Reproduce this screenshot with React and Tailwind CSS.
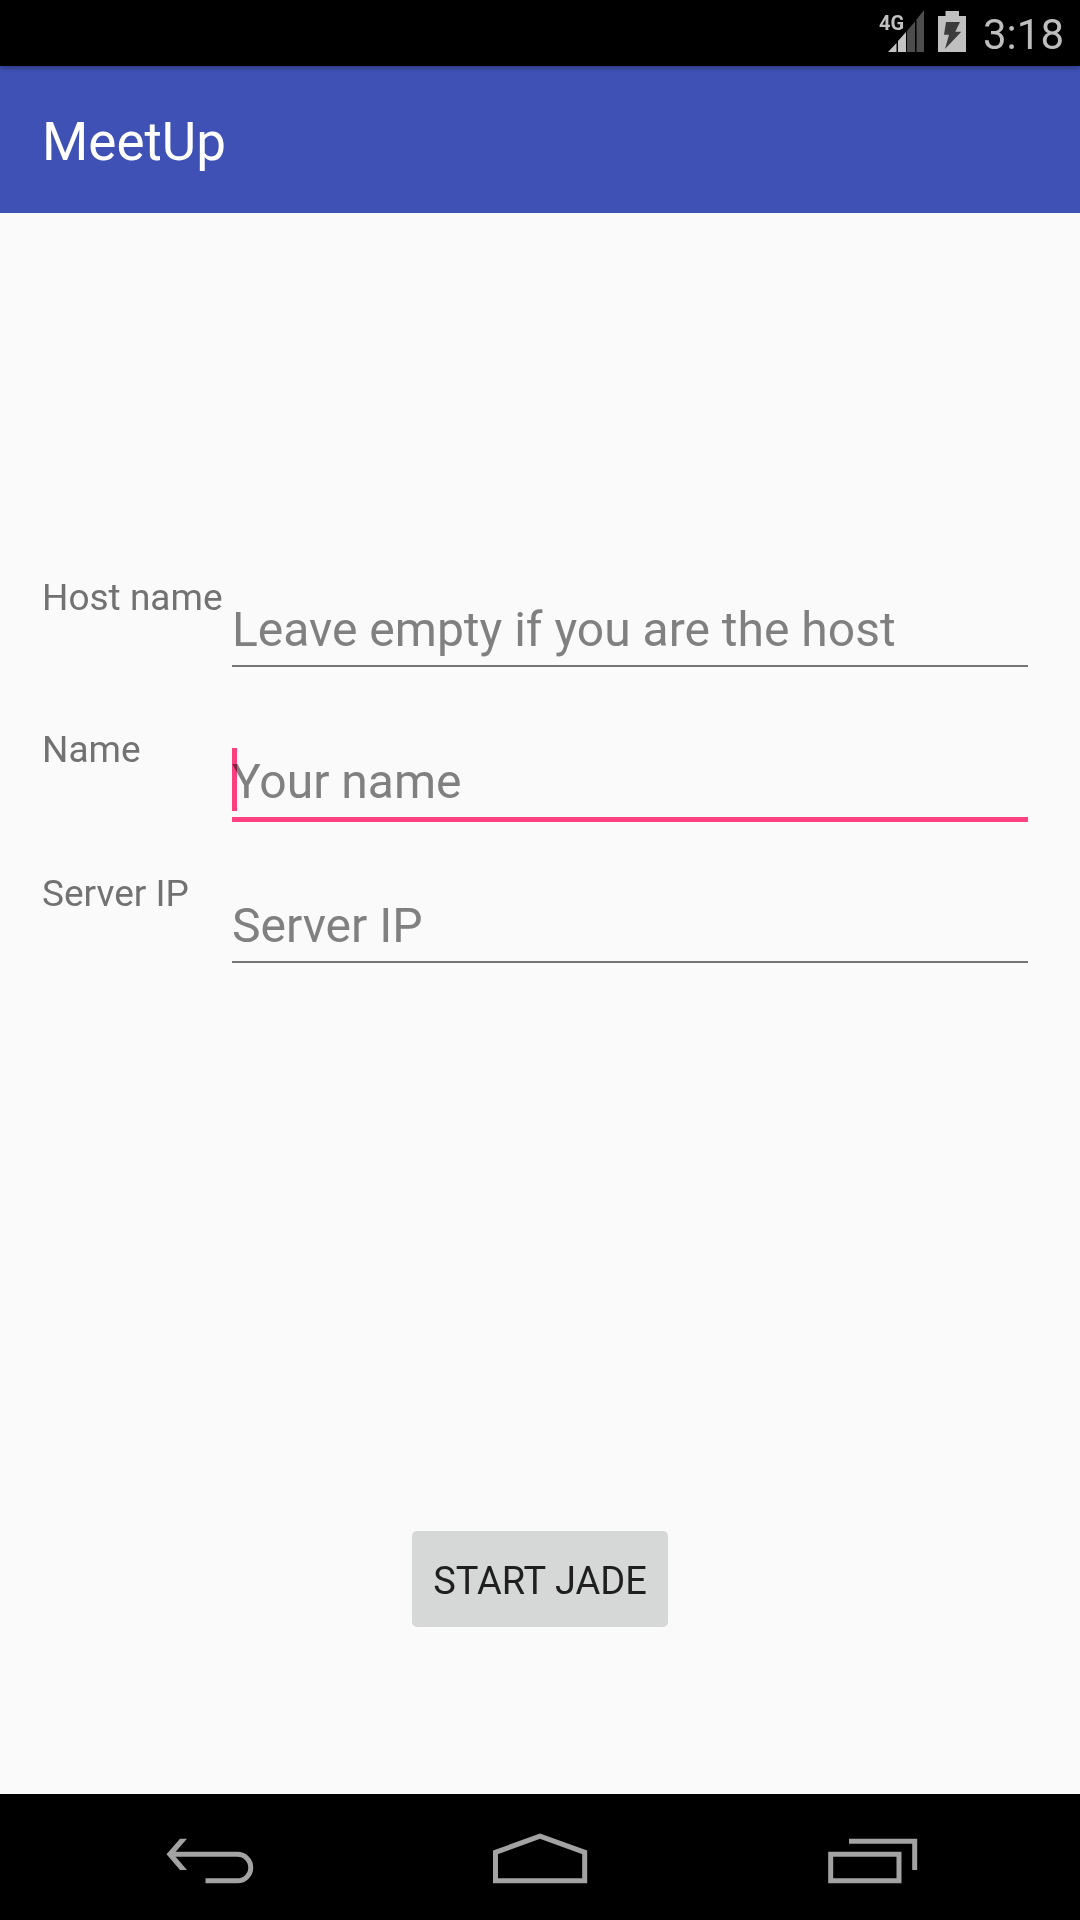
import React from "react";

function SignalIcon() {
  return (
    <div className="relative h-[42px] w-[46px]" role="img" aria-label="4G signal">
      <svg viewBox="0 0 46 42" className="h-[42px] w-[46px]" aria-hidden="true">
        <path d="M9 42L17.500 33V42Z" fill="#c4c4c4" />
        <path d="M19 31L27 22V42H19Z" fill="#c4c4c4" />
        <path d="M28 21L36 11.500V42H28Z" fill="#4d4d4d" />
        <path d="M37.500 9.500L45 0V42H37.500Z" fill="#4d4d4d" />
      </svg>
      <span className="absolute top-px left-0 text-[20px] leading-6 font-bold text-[#c0c0c0]">4G</span>
    </div>
  );
}

function BatteryIcon() {
  return (
    <svg viewBox="0 0 28 42" className="h-[42px] w-[28px]" role="img" aria-label="Charging">
      <path d="M7.500 1H21V6H28V42H0V6H7.500Z" fill="#c0c0c0" />
      <path d="M8 12H22L17.300 21.700H23.300L7 39L11 24.700H6Z" fill="#3c3c3c" />
    </svg>
  );
}

const fields = [
  { id: "host", label: "Host name", hint: "Leave empty if you are the host", gap: "", line: "border-b-2 border-[#757575]" },
  { id: "name", label: "Name", hint: "Your name", gap: "mt-[60px]", line: "border-b-[5px] border-[#ff4081]", active: true },
  { id: "server", label: "Server IP", hint: "Server IP", gap: "mt-[49px]", line: "border-b-2 border-[#757575]" },
];

function Field({ id, label, hint, gap, line, active }) {
  return (
    <div className={`flex items-start ${gap}`}>
      <label htmlFor={id} className="w-[190px] shrink-0 whitespace-nowrap text-[37px] leading-[46px] text-[#727272]">
        {label}
      </label>
      <div className="relative min-w-0 flex-1 pt-[27px]">
        <input
          id={id}
          type="text"
          placeholder={hint}
          className={`block h-auto w-full rounded-none bg-transparent pb-[7px] text-[48px] leading-[56px] text-[#212121] caret-[#ff4081] outline-none placeholder:text-[#808080] placeholder:opacity-100 ${line}`}
        />
        {active && <span className="absolute top-[21px] left-0 h-[63px] w-[5px] bg-[#ff4081] mix-blend-multiply" />}
      </div>
    </div>
  );
}

function NavButton({ label, children }) {
  return (
    <button type="button" aria-label={label} className="flex flex-1 justify-center">
      <svg viewBox="0 0 140 126" className="h-[126px] w-[140px]" fill="none" stroke="#a3a3a3" strokeWidth="5" aria-hidden="true">
        {children}
      </svg>
    </button>
  );
}

export default function App() {
  return (
    <div className="flex min-h-screen flex-col bg-[#fafafa] font-['Roboto',sans-serif]">
      <div className="relative flex h-[66px] items-start justify-end bg-black pt-[10px] pr-4 shadow-[0_1px_6px_rgba(0,0,0,0.4)]">
        <SignalIcon />
        <span className="ml-[13px] flex">
          <BatteryIcon />
        </span>
        <span className="ml-[17px] text-[42px] leading-[50px] font-normal text-[#bebebe]">3:18</span>
      </div>

      <header className="flex h-[147px] items-center bg-[#3f51b5] px-[42px] pt-1">
        <h1 className="text-[53px] leading-[62px] text-white">MeetUp</h1>
      </header>

      <main className="flex flex-1 flex-col pt-[362px] pr-[52px] pb-[167px] pl-[42px]">
        <form className="flex flex-1 flex-col">
          {fields.map((f) => (
            <Field key={f.id} {...f} />
          ))}
          <button
            type="button"
            className="mt-auto mr-[-10px] h-24 self-center rounded-[5px] bg-[#d6d7d7] px-[21px] pt-1 text-[38px] leading-[44px] text-[#1f1f1f]"
          >
            START JADE
          </button>
        </form>
      </main>

      <nav className="flex h-[126px] bg-black px-[45px]">
        <NavButton label="Back">
          <path d="M31 60.300H97.500A13.250 13.250 0 0 1 97.500 86.800H65.500" />
          <path d="M26.500 60.300L40 44.800H47L33.500 60.300L47 76H40Z" fill="#a3a3a3" stroke="none" />
        </NavButton>
        <NavButton label="Home">
          <path d="M25.500 86.800V58.300L70 42.200L114.700 58.300V86.800Z" />
        </NavButton>
        <NavButton label="Recent apps">
          <path d="M30.700 60.300H99V86.800H30.700Z" />
          <path d="M49 47.200H114.700V76" />
        </NavButton>
      </nav>
    </div>
  );
}
